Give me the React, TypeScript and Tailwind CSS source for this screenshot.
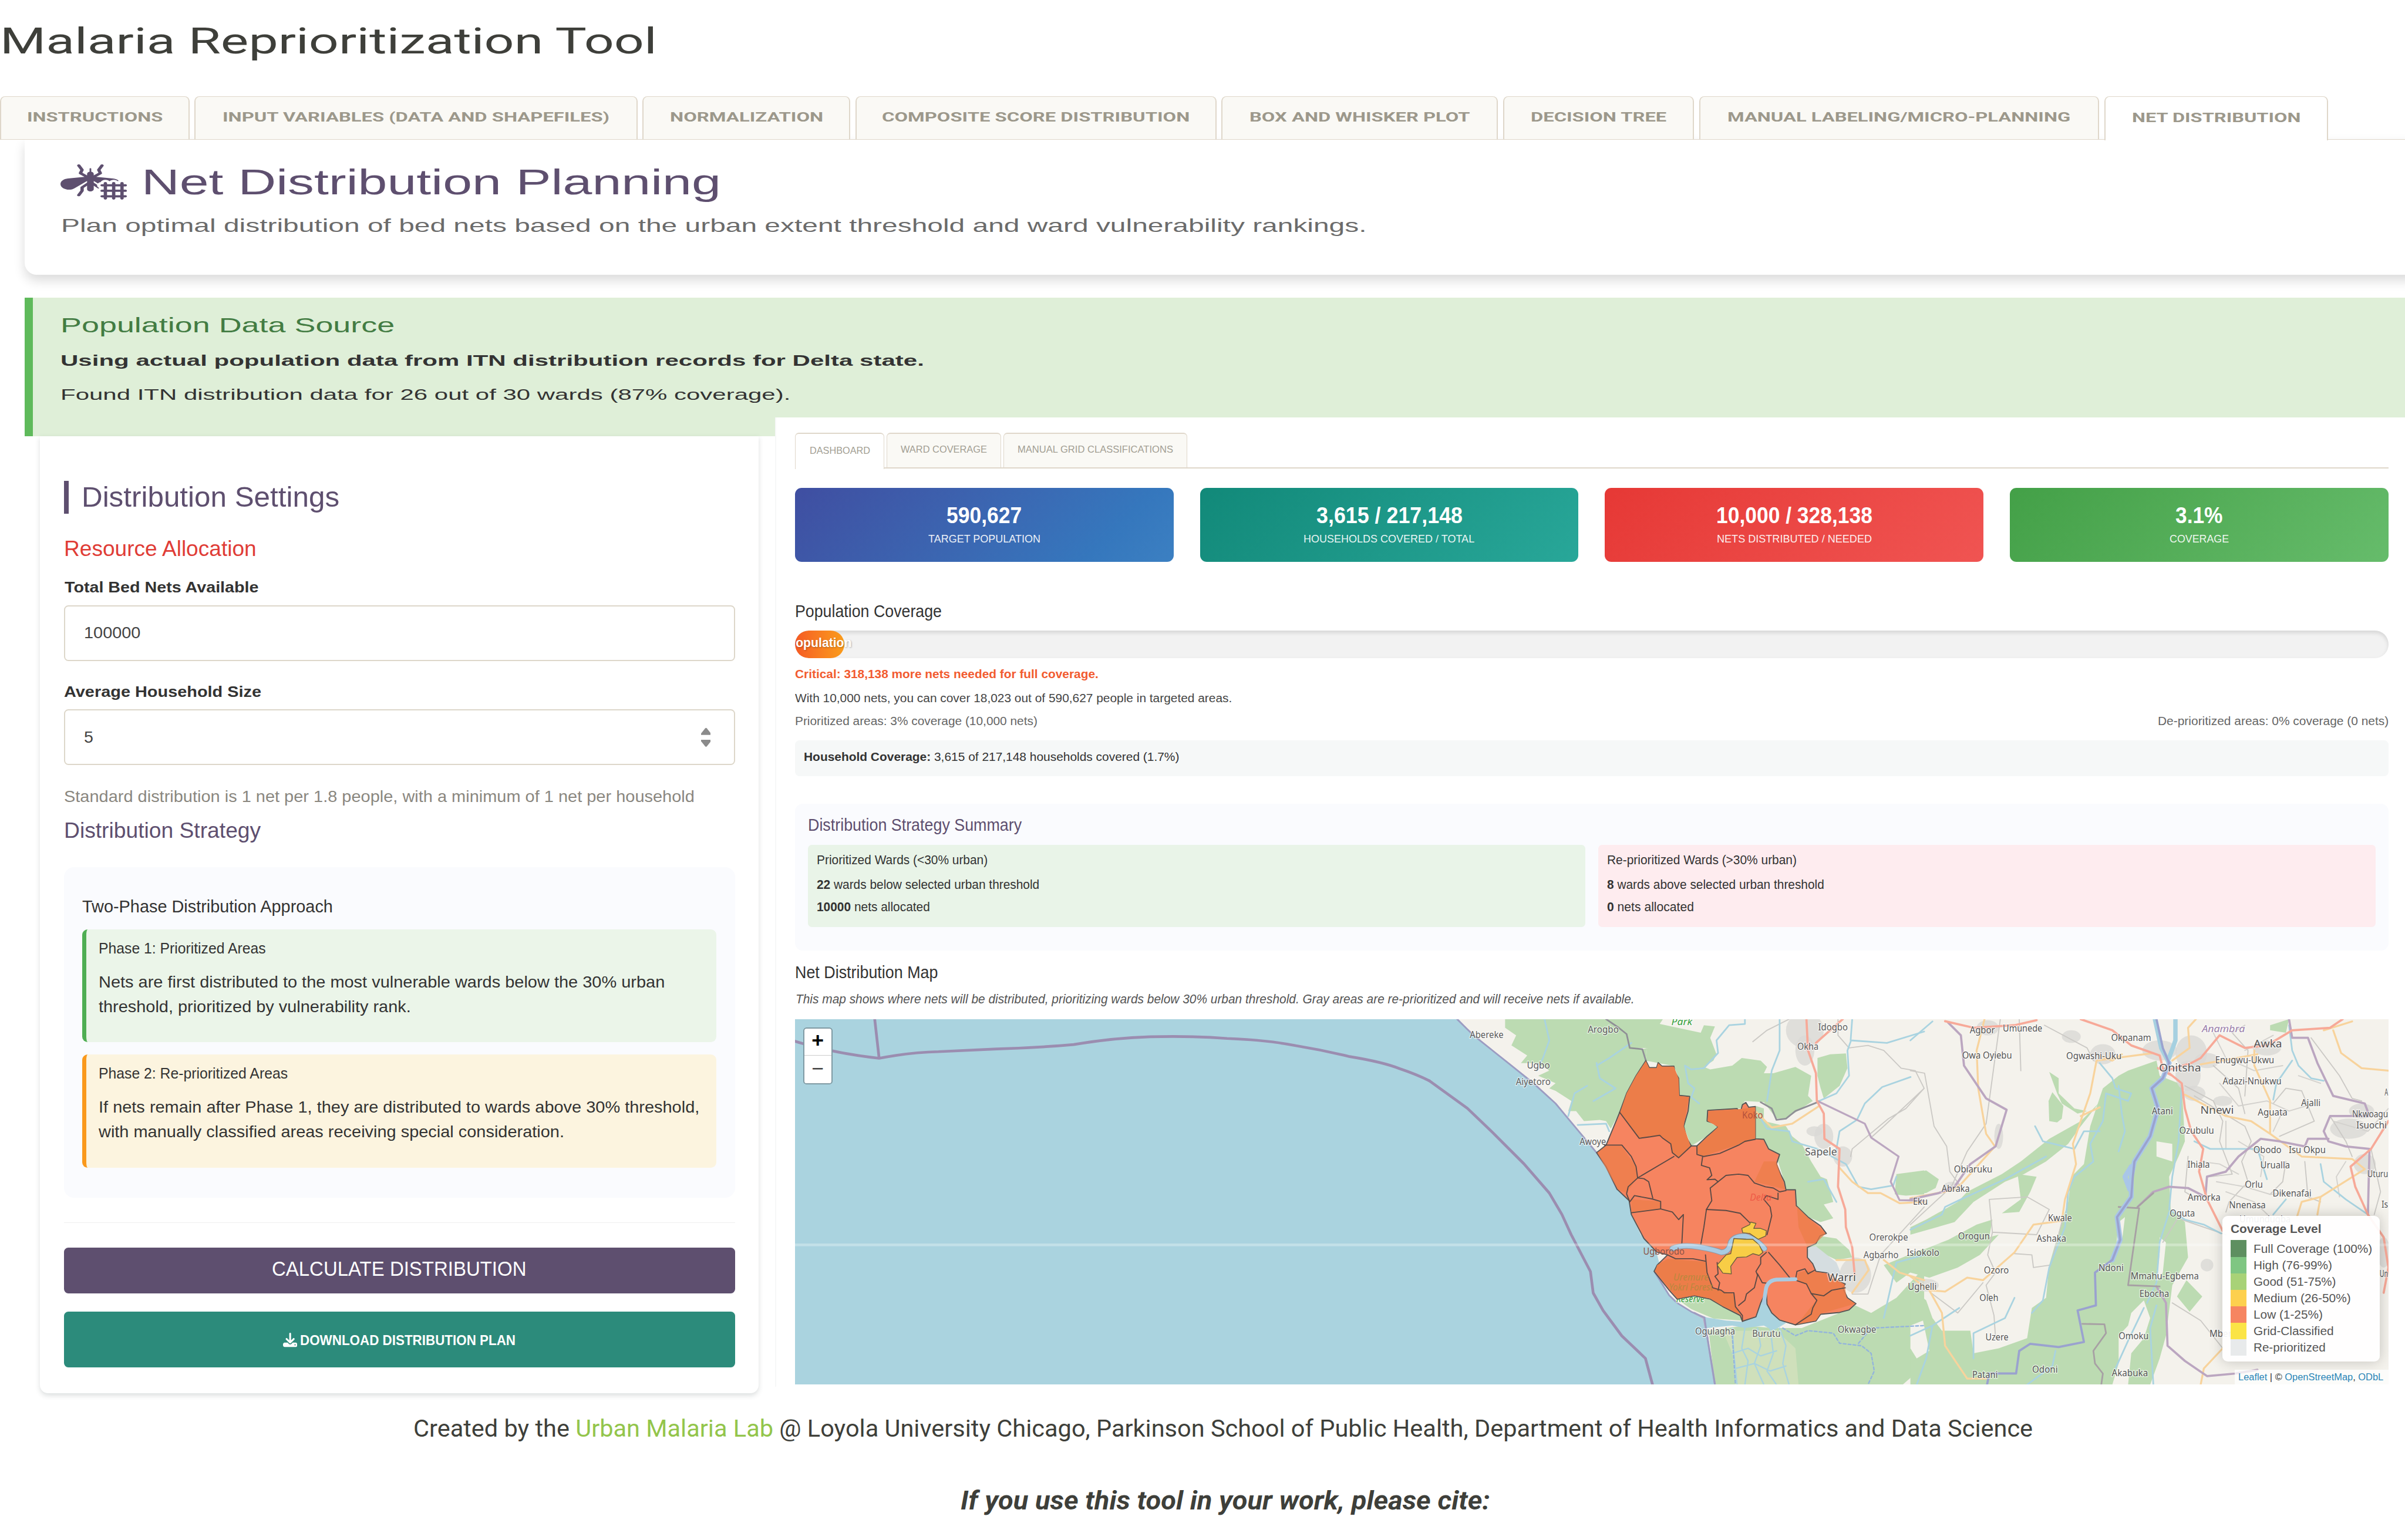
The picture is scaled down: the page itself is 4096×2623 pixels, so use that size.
import { useLayoutEffect, useRef, type ReactNode } from "react";
import { FaDownload, FaMosquitoNet } from "react-icons/fa6";

/** One line of text, stretched horizontally to fill the width of its box. */
function Fit({ className, children }: { className: string; children: ReactNode }) {
  const box = useRef<HTMLDivElement>(null);
  const line = useRef<HTMLSpanElement>(null);
  useLayoutEffect(() => {
    const fit = () => {
      if (!box.current || !line.current) return;
      line.current.style.transform = "none";
      const target = box.current.getBoundingClientRect().width;
      const natural = line.current.getBoundingClientRect().width;
      line.current.style.transform = `scaleX(${target / natural})`;
    };
    fit();
    document.fonts?.ready.then(fit);
  }, []);
  return (
    <div ref={box} className={`flex shrink-0 leading-none whitespace-nowrap ${className}`}>
      <span ref={line} className="block shrink-0 origin-left">
        {children}
      </span>
    </div>
  );
}

const TABS = [
  { label: "INSTRUCTIONS", tab: "w-[345px]", text: "w-[247px]" },
  { label: "INPUT VARIABLES (DATA AND SHAPEFILES)", tab: "w-[806px]", text: "w-[704px]" },
  { label: "NORMALIZATION", tab: "w-[378px]", text: "w-[279px]" },
  { label: "COMPOSITE SCORE DISTRIBUTION", tab: "w-[657px]", text: "w-[560px]" },
  { label: "BOX AND WHISKER PLOT", tab: "w-[503px]", text: "w-[401px]" },
  { label: "DECISION TREE", tab: "w-[348px]", text: "w-[247px]" },
  { label: "MANUAL LABELING/MICRO-PLANNING", tab: "w-[728px]", text: "w-[624px]" },
  { label: "NET DISTRIBUTION", tab: "w-[407px]", text: "w-[307px]", active: true },
];

const SUB_TABS = [
  { label: "DASHBOARD", tab: "w-[163px]", text: "w-[110px]", active: true },
  { label: "WARD COVERAGE", tab: "w-[208px]", text: "w-[157px]" },
  { label: "MANUAL GRID CLASSIFICATIONS", tab: "w-[335px]", text: "w-[283px]" },
];

const STATS = [
  { value: "590,627", label: "TARGET POPULATION", vw: "w-[137px]", lw: "w-[204px]", bg: "from-[#3f4ea1] via-[#3577bd] via-80% to-[#3c80c2]" },
  { value: "3,615 / 217,148", label: "HOUSEHOLDS COVERED / TOTAL", vw: "w-[266px]", lw: "w-[311px]", bg: "from-[#118979] to-[#28a799]" },
  { value: "10,000 / 328,138", label: "NETS DISTRIBUTED / NEEDED", vw: "w-[284px]", lw: "w-[282px]", bg: "from-[#e63835] to-[#f05452]" },
  { value: "3.1%", label: "COVERAGE", vw: "w-[86px]", lw: "w-[108px]", bg: "from-[#43a047] to-[#66bc6b]" },
];

const LEGEND = [
  { label: "Full Coverage (100%)", w: "w-[216px]", bg: "bg-[#5e8f60]" },
  { label: "High (76-99%)", w: "w-[143px]", bg: "bg-[#7fc682]" },
  { label: "Good (51-75%)", w: "w-[150px]", bg: "bg-[#a8d277]" },
  { label: "Medium (26-50%)", w: "w-[177px]", bg: "bg-[#fdd04e]" },
  { label: "Low (1-25%)", w: "w-[126px]", bg: "bg-[#f68561]" },
  { label: "Grid-Classified", w: "w-[146px]", bg: "bg-[#fbe446]" },
  { label: "Re-prioritized", w: "w-[131px]", bg: "bg-[#e8eaeb]" },
];

/* Map geometry: the west sheet and the east sheet have their own grids. */
const WEST = "matrix(0.574 0 0 0.4592 1154 -35)";
const EAST = "matrix(0.574 0 0 0.4592 2029 -35)";

const WEST_GREEN = [
  "240,76 570,76 620,130 640,190 675,195 690,190 686,240 655,300 625,370 603,445 575,510 560,480 540,475 490,480 465,440 440,440 450,400 400,360 380,350 400,330 345,300 380,280 340,250 290,250 310,220 260,180 275,140 240,110",
  "570,76 740,76 730,95 860,130 870,100 905,105 890,150 910,215 900,240 870,265 890,275 960,260 990,230 1050,240 1070,265 1060,290 1090,290 1160,265 1210,300 1200,380 1215,400 1130,470 1100,470 1060,405 1000,400 985,430 882,437 880,480 915,503 880,540 830,578 806,500 825,382 790,378 790,310 775,262 686,240 690,190 640,190",
  "1230,230 1270,215 1320,212 1325,270 1300,340 1250,390 1240,350 1230,300",
  "1035,420 1060,430 1060,480 1130,500 1150,540 1180,570 1210,640 1240,700 1260,710 1280,800 1250,810 1280,865 1240,880 1200,860 1163,815 1160,752 1130,752 1125,720 1105,640 1075,590 1033,550",
  "1480,690 1568,675 1568,770 1510,775 1475,770",
  "1238,935 1290,945 1330,990 1340,1020 1290,1030 1200,975",
  "885,1310 1000,1290 1090,1300 1180,1300 1300,1240 1350,1210 1400,1240 1480,1180 1568,1060 1568,1450 1500,1524 905,1524",
  "785,1185 840,1172 890,1185 930,1215 985,1250 990,1270 900,1262 830,1225",
  "1440,1050 1568,985 1568,1040 1480,1120",
];

const WARDS =
  "686,240 697,268 720,268 725,248 737,262 775,262 778,285 790,310 792,378 825,382 820,440 806,500 815,545 830,578 848,578 880,540 915,503 900,488 880,480 882,437 975,430 985,446 992,415 1003,406 1012,425 1033,422 1033,550 1060,552 1075,590 1110,612 1100,650 1113,690 1125,720 1130,752 1160,752 1163,815 1200,860 1240,895 1258,925 1238,935 1225,965 1198,980 1198,1020 1215,1045 1225,1075 1265,1082 1275,1105 1318,1125 1310,1140 1325,1180 1352,1203 1330,1228 1300,1238 1240,1245 1225,1272 1160,1287 1110,1268 1085,1240 1070,1205 1068,1150 1050,1200 1035,1255 992,1273 985,1250 930,1215 890,1185 840,1172 785,1185 760,1150 712,1075 722,1050 755,1010 720,998 680,945 640,850 633,795 595,750 560,660 530,605 560,575 603,445 625,370 655,300";

const WARD_LINES = [
  "603,445 665,548 700,542 730,536 740,548 765,570 770,605 790,625 830,578",
  "555,575 610,575 640,620 655,660 660,705 775,620",
  "660,705 630,740 625,768 635,800 650,775 705,788 733,798 733,828 640,843",
  "660,705 680,708 695,720 708,785",
  "733,828 770,840 790,870 805,850 800,968",
  "848,578 848,612 870,620 920,608 980,575 1000,560 1033,552",
  "866,620 862,655 888,665 895,695 880,712 905,710 915,720 940,695 980,690 1010,695 1030,725 1065,740 1090,745 1110,760 1130,755",
  "915,720 890,745 895,795 878,830 870,900 860,970",
  "878,830 940,834 985,845 1015,882",
  "1070,930 1085,855 1080,820 1060,790 1068,775 1105,790 1105,765",
  "755,1010 780,1025 835,1025 875,1035",
  "875,1010 880,1080 898,1140 925,1150 935,1160 965,1160 970,1215 992,1250 992,1273",
  "912,1040 915,1085 905,1095 920,1120 915,1150",
  "1068,1000 1050,1020 1050,1045 1035,1075 1040,1090 1030,1140 1005,1165 1000,1190 980,1210",
  "1075,1000 1110,1050 1145,1105",
  "1040,1085 1055,1120 1070,1122",
  "1160,1110 1165,1075 1190,1065 1200,1085 1222,1070",
  "1160,1110 1195,1125 1205,1150 1210,1163 1250,1172 1275,1150 1318,1140",
  "1210,1163 1228,1190 1215,1220 1210,1245 1160,1287",
];

const EAST_GREEN = [
  "690,280 780,240 790,300 810,310 860,335 870,560 850,620 820,700 825,830 870,880 880,1020 830,1130 810,1330 790,1420 760,1524 0,1524 0,1140 50,1190 70,1260 100,1310 190,1310 200,1400 280,1380 370,1340 385,1220 430,1180 440,1050 470,920 500,800 510,700 550,650 570,500 610,350 660,300",
  "600,405 540,480 440,550 350,640 290,690 180,760 150,800 50,870 0,900 0,930 140,880 200,800 300,720 360,690 430,640 500,570 540,500",
  "450,365 485,420 480,470 465,485 440,480 438,400",
  "0,690 50,675 90,710 80,745 50,765 0,770",
  "0,1010 120,950 210,890 260,870 250,940 280,930 220,1010 150,1060 60,1100 0,1080",
  "340,690 400,700 380,760 345,840 290,845 350,790",
  "875,1110 925,1175 885,1235 845,1175",
  "1140,100 1200,76 1190,130 1140,120",
  "440,285 470,310 470,370 520,430 560,440 530,450 480,410 465,370",
];
const EAST_CLEAR = [
  "700,1240 740,1190 760,1260 740,1340 700,1400 690,1524 640,1524 660,1440 660,1330 690,1290",
  "780,560 830,570 830,640 780,620",
  "790,940 810,960 800,1080 780,1120 790,1000",
  "660,880 680,860 670,960 650,1000",
  "0,1290 40,1270 60,1390 20,1420 0,1380",
];

const ROADS: { d: string; sheet: string; stroke: string; w: number }[] = [
  // minor roads
  { sheet: WEST, stroke: "#cbc9c5", w: 2, d: "M1295,76L1295,140L1330,190L1390,180L1440,200L1495,270L1540,280L1568,350L1510,430L1455,470L1340,590L1335,620 M1568,820L1430,1010L1390,1165L1340,1165 M1025,165L1070,120L1140,76 M1400,545L1440,500L1568,350" },
  { sheet: EAST, stroke: "#cbc9c5", w: 2, d: "M285,76L240,490L180,600L130,740L0,890 M0,280L45,290L75,500L115,580L125,680L160,740 M425,100L560,190L580,240 M350,280L345,76 M250,790L370,780L440,830L400,930L260,920L250,790 M260,920L245,1010L270,1080L240,1130L265,1250L270,1340 M65,1160L150,1240L230,1120 M330,1005L385,1010L390,1060L445,1050L480,880 M870,340L960,400L990,480L980,560L1020,690L950,700 M900,380L1060,500L1080,560L1050,640L1070,720L1010,800L1000,840 M1060,380L1070,200L1020,130L1060,100 M960,260L1040,350L1060,450 M1150,410L1190,350L1240,360L1280,480L1170,540 M1250,640L1260,780L1300,800 M1330,460L1380,560L1400,620 M860,870L1000,930 M850,860L800,960 M830,1200L920,1270L990,1380 M1270,150L1360,300L1400,390L1430,400 M1140,770L1180,720L1190,640 M880,620L870,760L910,790 M1460,590L1490,760L1470,850" },
  { sheet: EAST, stroke: "#d3d1cd", w: 2, d: "M960,130L1000,230L1090,280L1180,260 M980,330L1040,420L1130,400L1200,440L1280,410 M1000,480L1000,590 M1060,200L1150,140 M1040,560L1120,620L1110,700 M970,720L1060,740L1140,770L1240,760 M1180,440L1150,520 M1230,300L1300,330 M1000,760L1090,800L1140,860 M920,640L980,650L1040,690 M1340,480L1450,520L1515,430 M1380,640L1350,700L1360,780" },
  // streams
  { sheet: WEST, stroke: "#a9d3e0", w: 3, d: "M1000,76L1000,95L950,100L910,160L915,210L870,270L830,275L810,260L820,330L840,350L830,385L855,410 M1110,76L1110,200L1085,280L1070,400 M1340,76L1335,160L1450,170L1568,125 M1335,165L1325,200L1330,300L1290,370L1235,400 M1525,305L1435,345L1380,410L1355,475L1300,520L1290,590 M365,76L380,160L360,230L340,280 M530,250L540,310L590,350L520,400 M640,170L570,230L530,260 M1035,440L1070,510L1140,520L1150,560L1230,590L1320,650L1360,740L1400,750L1470,735L1480,700 M1200,720L1250,710L1290,800 M1568,1010L1480,1040L1460,1150L1440,1260 M470,495L560,490L570,520 M440,460L460,370L500,340" },
  { sheet: EAST, stroke: "#a9d3e0", w: 3, d: "M0,910L100,850L110,820L160,790L300,710L430,620 M395,500L420,560L520,590L550,520L600,520 M600,250L640,310L650,350L700,370L690,400L620,370L610,480L570,570L580,640L520,700L500,760L490,900L440,1060L420,1190L385,1240 M0,160L70,85 M660,340L670,450L680,520L660,600 M860,340L850,560L830,700L820,830L870,870L930,890L985,925 M900,560L950,590L1100,590L1130,710 M1200,100L1210,200L1230,260L1270,310L1310,320 M1210,240L1160,330L1150,395 M1300,650L1310,720L1380,790L1450,850 M820,840L790,960L780,1120L750,1200 M780,1210L760,1300L770,1524 M330,1180L300,1260L200,1320L200,1420 M155,1220L70,1290L50,1420L20,1524 M0,1330L70,1290 M460,1390L450,1450L370,1524 M740,1220L690,1350L650,1460 M1190,790L1150,850" },
  // secondary roads
  { sheet: WEST, stroke: "#f8d39c", w: 3.5, d: "M1033,440L1085,505L1150,490L1235,420 M1300,665L1340,720L1390,765L1430,765L1490,805L1568,800 M1290,1030L1380,1030L1392,1070L1340,1160 M1440,1030L1490,1080L1568,1110" },
  { sheet: EAST, stroke: "#f8d39c", w: 3.5, d: "M235,76L210,200L215,350L240,530L268,580L160,730L130,755L0,785 M590,240L570,370L545,460L515,570L525,650L490,790L480,875L390,890L330,1000L230,1110L180,1100L110,1155L60,1150L0,1095 M60,1150L100,1240L110,1370L180,1500L240,1500 M590,240L770,210 M830,240L885,190L880,110L905,76 M870,375L1000,460L1080,480L1140,530L1240,620L1400,630L1440,670L1300,780L1240,800L1225,860 M1090,200L1090,260L1140,400L1140,530 M1340,120L1365,210L1430,270L1515,280 M990,1380L930,1460L920,1524 M920,255L1100,215 M1310,120L1400,85 M1300,780L1290,850 M600,220L640,240L670,215 M540,460L600,425" },
  // state boundaries
  { sheet: WEST, stroke: "#bba6c0", w: 3.5, d: "M1230,400L1380,490L1400,545L1487,620L1462,720L1490,793L1568,795 M840,1240L870,1260L880,1330L905,1524" },
  { sheet: WEST, stroke: "#8f8f96", w: 3, d: "M560,76L600,110L625,135L635,190L675,195L686,240 M1050,405L1085,430L1100,475L1130,470L1160,440L1230,405" },
  { sheet: EAST, stroke: "#bba6c0", w: 4, d: "M120,90L160,140L170,260L240,390L305,435L270,580L190,650L140,740L90,765L0,790 M1200,76L1210,150L1260,150L1290,250L1340,380L1440,410L1455,460L1330,460L1310,520L1325,560L1380,580L1455,590L1450,850 M1325,550L1260,550L1250,580L1170,560L1110,550L1040,620L1000,680L940,700L935,780L880,745L820,740L770,760L720,820 M780,1135L810,1200L815,1370L870,1430L940,1490L1030,1480L1100,1465" },
  { sheet: EAST, stroke: "#a7a0a4", w: 3, d: "M660,820L725,825L690,1130L790,1135 M545,1283L615,1285L620,1320L580,1390L585,1440L610,1480L605,1524 M720,820L770,765" },
  // primary roads
  { sheet: WEST, stroke: "#f7a998", w: 4, d: "M1195,76L1200,200L1225,290L1228,400L1250,450L1252,550L1300,590L1295,740L1318,830L1320,900L1340,980L1348,1090 M1310,76L1225,170" },
  { sheet: EAST, stroke: "#f7a998", w: 4, d: "M110,84L200,110L330,100L400,80 M540,76L640,120L700,180L790,220L800,270L860,330L870,430L890,520L928,590L915,680L940,790L990,915 M810,280L890,250L920,230L980,140L1060,190L1130,180L1210,120L1330,110L1370,76 M1515,480L1460,590L1395,660L1410,740L1450,850L1500,940L1515,1060L1500,1160 M830,300L785,270" },
  // the Niger
  { sheet: EAST, stroke: "#a6d0e0", w: 8, d: "M775,76L795,190L820,250 M840,76L840,160L820,230" },
  { sheet: EAST, stroke: "#a9c6e8", w: 9, d: "M820,250L800,310L765,350L785,430L760,540L710,640L700,700L700,780L655,860L665,950L640,1030 M700,660L680,700L695,750" },
  { sheet: EAST, stroke: "#9aa2cf", w: 4, d: "M780,76L800,190L820,250L800,310L765,350L785,430L760,540L710,640L705,700L700,780L655,860L665,950L640,1030L585,1080L588,1210L530,1230L550,1355L470,1375L380,1362L345,1390L335,1480L250,1480L243,1524" },
];

const URBAN: [number, number, number, number, 0 | 1][] = [
  [1190, 120, 60, 70, 0], [1190, 200, 30, 60, 0], [1250, 540, 30, 50, 0], [1310, 620, 30, 40, 0], [1350, 1090, 50, 70, 0], [1220, 520, 25, 20, 0],
  [890, 210, 50, 70, 1], [880, 300, 40, 60, 1], [790, 200, 55, 40, 1], [940, 240, 40, 30, 1], [510, 145, 30, 25, 1], [610, 215, 40, 40, 1], [245, 110, 35, 30, 1], [900, 370, 35, 30, 1], [1130, 190, 45, 30, 1], [990, 400, 30, 20, 1], [1430, 440, 40, 30, 1], [1390, 510, 60, 40, 1], [50, 1130, 40, 25, 1], [130, 740, 25, 20, 1], [1440, 650, 35, 40, 1], [280, 540, 14, 50, 1], [940, 1050, 20, 25, 1], [1500, 1000, 20, 60, 1],
];

type Label = [string, number, number, number, number?];
const WEST_LABELS: Label[] = [
  ["Abereke", 128, 235, 137], ["Arogbo", 502, 600, 118], ["Ugbo", 309, 382, 260], ["Aiyetoro", 274, 384, 324], ["Awoye", 476, 560, 562],
  ["Idogbo", 1232, 1326, 108], ["Okha", 1166, 1233, 185], ["Sapele", 1190, 1292, 602, 20], ["Orerokpe", 1394, 1517, 940], ["Agbarho", 1376, 1487, 1010],
  ["Ogulagha", 842, 969, 1313], ["Burutu", 1023, 1113, 1322], ["Okwagbe", 1294, 1416, 1306],
];
const EAST_LABELS: Label[] = [
  ["Agbor", 188, 268, 120], ["Umunede", 293, 418, 112], ["Okpanam", 636, 763, 150], ["Awka", 1088, 1178, 172, 20], ["Owa Oyiebu", 164, 322, 220],
  ["Ogwashi-Uku", 494, 669, 222], ["Enugwu-Ukwu", 966, 1153, 237], ["Onitsha", 788, 921, 268, 20], ["Adazi-Nnukwu", 990, 1176, 322], ["Ajalli", 1238, 1300, 408],
  ["Nnewi", 919, 1025, 435, 20], ["Aguata", 1101, 1195, 444], ["Atani", 765, 832, 441], ["Nkwoagu", 1400, 1514, 452], ["Isuochi", 1413, 1510, 497],
  ["Ozubulu", 852, 962, 518], ["Obodo", 1087, 1176, 594], ["Isu Okpu", 1199, 1316, 595], ["Ihiala", 878, 949, 652], ["Urualla", 1109, 1203, 655],
  ["Uturu", 1448, 1514, 690], ["Obiaruku", 138, 260, 670], ["Abraka", 99, 188, 748], ["Orlu", 1060, 1117, 732], ["Dikenafai", 1148, 1271, 766],
  ["Amorka", 879, 983, 783], ["Eku", 8, 55, 799], ["Nnenasa", 1010, 1126, 812], ["Oguta", 822, 902, 845], ["Kwale", 436, 512, 863],
  ["Orogun", 151, 252, 937], ["Ashaka", 400, 494, 945], ["Isiokolo", -12, 92, 1000], ["Ozoro", 233, 312, 1071], ["Ndoni", 596, 676, 1062],
  ["Mmahu-Egbema", 698, 914, 1094], ["Ebocha", 726, 820, 1163], ["Ughelli", -8, 83, 1135], ["Oleh", 219, 279, 1180], ["Uzere", 238, 311, 1335],
  ["Omoku", 660, 755, 1332], ["Odoni", 386, 467, 1465], ["Patani", 196, 277, 1485], ["Akabuka", 638, 753, 1477], ["Mberichi", 948, 1064, 1323],
  ["Umundugba", 1043, 1205, 868], ["Is", 1493, 1514, 810], ["Un", 1487, 1514, 1085], ["A", 1503, 1514, 365],
];

function Labels({ items, x0, fill, italic }: { items: Label[]; x0: number; fill: string; italic?: boolean }) {
  return (
    <g fill={fill} stroke="#ffffff" strokeOpacity="0.6" strokeWidth="3" paintOrder="stroke" fontFamily='"Noto Sans", sans-serif' fontStyle={italic ? "italic" : "normal"}>
      {items.map(([name, a, b, y, size = 17]) => (
        <text key={name + a} x={x0 + a * 0.574} y={-35 + y * 0.4592 + size * 0.34} fontSize={size} textLength={(b - a) * 0.574} lengthAdjust="spacingAndGlyphs">
          {name}
        </text>
      ))}
    </g>
  );
}

function MapTiles() {
  return (
    <svg viewBox="0 0 2899 665" preserveAspectRatio="none" className="block h-full w-full" fill="none" strokeLinejoin="round" strokeLinecap="round">
      <rect width="2899" height="665" fill="#f4f2ec" />
      <g transform={WEST}>
        {WEST_GREEN.map((p) => <polygon key={p} points={p} fill="#bcdbb2" />)}
        <polygon points="930,1310 1100,1310 1160,1380 1170,1524 970,1524 960,1400" fill="#cfe0bb" />
        <polygon points="-2012,70 88,70 140,140 250,250 330,330 400,410 440,470 480,530 530,605 560,660 595,750 635,800 640,850 670,930 720,1000 730,1050 715,1080 760,1170 785,1200 830,1235 880,1258 940,1270 990,1275 1040,1240 1055,1180 1070,1180 1090,1240 1130,1280 1090,1310 1060,1290 1000,1300 960,1290 880,1300 890,1400 905,1530 -2012,1530" fill="#aad3df" />
        <polygon points="1198,980 1225,975 1290,1040 1310,1100 1265,1082 1225,1075 1215,1045 1198,1020" fill="#d5dde0" />
      </g>
      <g transform={EAST}>
        {EAST_GREEN.map((p) => <polygon key={p} points={p} fill="#bcdbb2" />)}
        {EAST_CLEAR.map((p) => <polygon key={p} points={p} fill="#f4f2ec" />)}
      </g>
      {URBAN.map(([x, y, rx, ry, east]) => (
        <ellipse key={`${x}-${y}`} cx={(east ? 2029 : 1154) + x * 0.574} cy={-35 + y * 0.4592} rx={rx * 0.574} ry={ry * 0.4592} fill="#d9d8d6" opacity="0.8" />
      ))}
      {/* delta creeks */}
      <g transform={WEST} stroke="#a9d3e0" strokeWidth="2.5">
        <path vectorEffect="non-scaling-stroke" d="M960,1300L965,1400L975,1524 M1000,1300L990,1380L1010,1430L1000,1524 M1040,1300L1050,1370L1030,1440L1060,1524 M1080,1300L1090,1400L1070,1470L1100,1524 M960,1400L1010,1380L1050,1410L1100,1390 M970,1460L1030,1440L1080,1470L1130,1450 M1110,1300L1130,1370L1120,1440L1140,1524" />
      </g>
      <g transform={WEST} stroke="#93b4dc" strokeWidth="2.5" strokeDasharray="5 4">
        <path vectorEffect="non-scaling-stroke" d="M1120,1300L1160,1330L1200,1310L1280,1320L1300,1360L1370,1370L1400,1400L1410,1470L1390,1524 M960,1330L970,1524 M1360,1360L1400,1300L1568,1290" />
      </g>
      {ROADS.map((r) => (
        <g key={r.d} transform={r.sheet} stroke={r.stroke} strokeWidth={r.w}>
          <path vectorEffect="non-scaling-stroke" d={r.d} />
        </g>
      ))}
      {/* coastline and territorial limit */}
      <g transform={WEST} stroke="#9c9cc2" strokeWidth="3">
        <path vectorEffect="non-scaling-stroke" d="M88,76L140,140L250,250L330,330L400,410L440,470L480,530L530,605L560,660L595,750 M715,1080L760,1170L785,1200L830,1235L872,1258L880,1330L905,1524" />
      </g>
      <g stroke="#9b8db0" strokeWidth="5">
        <path d="M145,0L153,71 M0,40Q70,62 153,71Q210,60 261,59L367,54Q440,52 507,46Q580,34 646,32Q720,30 786,35Q860,38 911,48Q960,56 1009,68Q1070,78 1100,90Q1130,100 1154,112" />
        <path d="M1154,112L1223,162L1269,206L1326,263L1372,316L1395,355L1412,392L1447,459L1452,498L1470,530L1504,576L1547,617L1560,665" />
      </g>
      <Labels x0={1154} fill="#5b5b5b" items={WEST_LABELS} />
      <Labels x0={1154} fill="#35a03c" italic items={[["Park", 767, 833, 88], ["Reserve", 782, 872, 1184]]} />
      <Labels x0={2029} fill="#555555" items={EAST_LABELS} />
      <Labels x0={2029} fill="#9a7fab" italic items={[["Anambra", 924, 1060, 116]]} />
      <g transform={WEST}>
        <polygon points={WARDS} fill="#f68460" stroke="#555" strokeWidth="2" vectorEffect="non-scaling-stroke" />
        <g fill="#ec7d49">
          <polygon points="686,242 697,270 720,270 725,250 737,264 775,264 790,312 792,380 823,384 806,500 828,578 790,622 770,605 765,570 735,540 665,546 604,447 625,370 655,300" />
          <polygon points="885,440 975,433 1033,425 1033,550 980,573 870,618 850,610 850,580 915,503 882,480" />
          <polygon points="722,1050 755,1025 875,1037 882,1085 898,1140 965,1165 970,1215 985,1245 930,1213 890,1183 840,1170 787,1183 715,1075" />
          <polygon points="1170,1080 1195,1072 1225,1078 1265,1084 1316,1127 1322,1180 1350,1203 1240,1243 1225,1270 1165,1285 1226,1190 1208,1160 1200,1130 1163,1110" opacity="0.8" />
          <polygon points="560,578 608,577 655,660 658,703 625,766 597,750 532,605" opacity="0.7" />
          <polygon points="1165,818 1200,862 1256,925 1225,963 1198,978 1170,900" opacity="0.7" />
          <polygon points="1060,640 1100,640 1128,750 1030,720" opacity="0.7" />
          <polygon points="640,790 733,798 733,828 640,843" opacity="0.7" />
        </g>
        <g stroke="#5b4a45" strokeWidth="2">
          {WARD_LINES.map((p) => <polyline key={p} points={p} vectorEffect="non-scaling-stroke" />)}
        </g>
        <g stroke="#8d9aa8" strokeWidth="10.5">
          <path vectorEffect="non-scaling-stroke" d="M770,985Q800,968 850,978T925,1000Q950,1000 955,960Q965,935 1000,935Q1035,945 1062,985" />
        </g>
        <g stroke="#a9cbe2" strokeWidth="8">
          <path vectorEffect="non-scaling-stroke" d="M770,985Q800,968 850,978T925,1000Q950,1000 955,960Q965,935 1000,935Q1035,945 1062,985" />
          <path vectorEffect="non-scaling-stroke" d="M1160,1106L1100,1108Q1070,1112 1066,1150L1060,1200" strokeWidth="7" />
        </g>
        <g fill="#f8cd46" stroke="#6b6040" strokeWidth="1.5">
          <polygon vectorEffect="non-scaling-stroke" points="990,905 1015,890 1018,880 1035,885 1028,905 1050,905 1068,914 1066,935 1042,948 1015,925 993,922" />
          <polygon vectorEffect="non-scaling-stroke" points="965,945 1000,948 1025,948 1045,970 1057,1000 1045,1012 1025,1005 1005,1018 975,1020 955,1055 957,1085 930,1082 912,1050 940,1010 955,1005" />
        </g>
      </g>
      <Labels x0={1154} fill="#4c4c4c" items={[["Warri", 1262, 1352, 1100, 20]]} />
      {/* labels seen through the ward overlay */}
      <g fontFamily='"Noto Sans", sans-serif' fontSize="17">
        <text x="1723" y="180" fill="#b3503c" textLength="38" lengthAdjust="spacingAndGlyphs">Koko</text>
        <text x="1543" y="428" fill="#8a5348" textLength="75" lengthAdjust="spacingAndGlyphs">Ugborodo</text>
        <text x="1737" y="330" fill="#ec4a3d" opacity="0.7" fontStyle="italic">Delta</text>
        <g fill="#a98c3a" opacity="0.75" fontStyle="italic">
          <text x="1598" y="475" textLength="64" lengthAdjust="spacingAndGlyphs">Uremure</text>
          <text x="1590" y="494" textLength="80" lengthAdjust="spacingAndGlyphs">Yokri Forest</text>
        </g>
      </g>
      <rect y="408" width="2899" height="5" fill="#ffffff" opacity="0.3" />
    </svg>
  );
}

function NetMap() {
  return (
    <div className="relative mt-[24px] h-[665px] w-[2899px] overflow-hidden">
      <MapTiles />
      <div className="absolute top-[15px] left-[15px] flex w-[53px] flex-col rounded-[6px] border-3 border-[#7f9aa3] bg-white text-[38px] leading-none font-bold text-black">
        <button className="flex h-[50px] items-center justify-center border-b-2 border-[#ccc] pb-[3px]">+</button>
        <button className="flex h-[50px] items-center justify-center pb-[3px] font-normal text-[#444]">−</button>
      </div>
      <div className="absolute right-[16px] bottom-[42px] h-[265px] w-[286px] rounded-[10px] bg-white/93 pt-[12px] pl-[15px] text-[22.5px] text-[#555] shadow-[0_0_24px_rgba(0,0,0,0.2)]">
        <Fit className="w-[165px] font-bold">Coverage Level</Fit>
        <div className="mt-[10px] flex flex-col">
          {LEGEND.map((l) => (
            <div key={l.label} className="flex h-[30px] items-center gap-[12px]">
              <span className={`h-full w-[29px] ${l.bg}`} />
              <Fit className={l.w}>{l.label}</Fit>
            </div>
          ))}
        </div>
      </div>
      <div className="absolute right-0 bottom-0 flex h-[27px] w-[280px] items-center bg-white/75 pl-[7px] text-[17.5px] text-[#333]">
        <Fit className="w-[264px]">
          <span className="text-[#2a86b8]">Leaflet</span> | © <span className="text-[#2a86b8]">OpenStreetMap</span>, <span className="text-[#2a86b8]">ODbL</span>
        </Fit>
      </div>
    </div>
  );
}

function Settings() {
  return (
    <section className="ml-[72.5px] flex h-[1741px] w-[1308px] flex-col rounded-b-[15px] bg-white px-[43.5px] pt-[81px] text-[#333] shadow-[0_4px_9px_rgba(60,80,80,0.18)]">
      <div className="flex h-[60px] shrink-0 items-center border-l-9 border-[#5e4f6f] pl-[24px]">
        <Fit className="w-[469px] text-[51px] text-[#5e4f6f]">Distribution Settings</Fit>
      </div>
      <Fit className="mt-[44px] w-[350px] text-[40px] text-[#e03c36]">Resource Allocation</Fit>
      <Fit className="mt-[36px] ml-[2px] w-[353px] text-[28px] font-bold">Total Bed Nets Available</Fit>
      <div className="mt-[18.5px] flex h-[101.5px] shrink-0 items-center rounded-[8px] border-3 border-[#ddd7ca] bg-white pl-[35px] text-[30px] text-[#444]">
        <Fit className="w-[103px]">100000</Fit>
      </div>
      <Fit className="mt-[42px] w-[359px] text-[28px] font-bold">Average Household Size</Fit>
      <div className="mt-[18px] flex h-[101.5px] shrink-0 items-center justify-between rounded-[8px] border-3 border-[#ddd7ca] bg-white pr-[42px] pl-[35px] text-[30px] text-[#444]">
        <Fit className="w-[17px]">5</Fit>
        <svg viewBox="0 0 18 36" className="h-[36px] w-[18px]" fill="#8b8b8b">
          <path d="M7.5 1.5Q9 0 10.5 1.5L18 11V13.5H0V11Z" />
          <path d="M0 22.500H18V25L10.500 34.500Q9 36 7.500 34.500L0 25Z" />
        </svg>
      </div>
      <Fit className="mt-[43px] w-[1147px] text-[30px] text-[#8a877f]">
        Standard distribution is 1 net per 1.8 people, with a minimum of 1 net per household
      </Fit>
      <Fit className="mt-[26.5px] w-[358px] text-[40px] text-[#5e4f6f]">Distribution Strategy</Fit>
      <div className="mt-[46px] h-[602px] shrink-0 rounded-[18px] bg-[#fafbfe] pt-[57px] pr-[34px] pl-[34px]">
        <Fit className="w-[456px] text-[31px]">Two-Phase Distribution Approach</Fit>
        <div className="mt-[25.5px] h-[205.500px] rounded-[10px] border-l-8 border-[#4fae53] bg-[#ebf5e9] pt-[21px] pl-[22px]">
          <Fit className="w-[304px] text-[27px]">Phase 1: Prioritized Areas</Fit>
          <Fit className="mt-[32px] w-[1030px] text-[30.5px]">Nets are first distributed to the most vulnerable wards below the 30% urban</Fit>
          <Fit className="mt-[14px] w-[568px] text-[30.5px]">threshold, prioritized by vulnerability rank.</Fit>
        </div>
        <div className="mt-[22.5px] h-[205.500px] rounded-[10px] border-l-8 border-[#fa991c] bg-[#fcf4df] pt-[21px] pl-[22px]">
          <Fit className="w-[344px] text-[27px]">Phase 2: Re-prioritized Areas</Fit>
          <Fit className="mt-[32px] w-[1093px] text-[30.5px]">If nets remain after Phase 1, they are distributed to wards above 30% threshold,</Fit>
          <Fit className="mt-[14px] w-[847px] text-[30.5px]">with manually classified areas receiving special consideration.</Fit>
        </div>
      </div>
      <hr className="mt-[44px] border-t-2 border-[#eeeeee]" />
      <button className="mt-[45px] flex h-[84px] shrink-0 items-center justify-center rounded-[8px] bg-[#5e4f6f] pb-[6px] text-[37px] text-white">
        <Fit className="w-[463px]">CALCULATE DISTRIBUTION</Fit>
      </button>
      <button className="mt-[33px] flex h-[101px] shrink-0 items-center justify-center gap-[5px] rounded-[8px] bg-[#2c8b7b] pt-[2px] text-[25.5px] font-bold text-white">
        <FaDownload className="h-[26px] w-[26px]" preserveAspectRatio="none" />
        <Fit className="w-[392px]">DOWNLOAD DISTRIBUTION PLAN</Fit>
      </button>
    </section>
  );
}

function Dashboard() {
  return (
    <section className="-mt-[34.5px] ml-[29.5px] h-[1764px] w-[2965px] border-l-3 border-[#f7f8f8] bg-white pt-[28.5px] pl-[34px] text-[#333]">
      <nav className="flex h-[65px] w-[2899px] gap-[4px] border-b-3 border-[#dfd7ca] text-[17px] text-[#a29e93]">
        {SUB_TABS.map((t) => (
          <div
            key={t.label}
            className={`flex items-center justify-center rounded-t-[7px] border-x-2 border-t-3 border-[#dfd7ca] pb-[3px] ${t.tab} ${t.active ? "-mb-[3px] bg-white" : "bg-[#faf9f5]"}`}
          >
            <Fit className={t.text}>{t.label}</Fit>
          </div>
        ))}
      </nav>
      <div className="mt-[35px] grid h-[134.500px] w-[2899px] grid-cols-4 gap-[48px] text-white">
        {STATS.map((s) => (
          <div key={s.label} className={`flex flex-col items-center rounded-[12px] bg-linear-135 pt-[30px] ${s.bg}`}>
            <Fit className={`text-[41px] font-bold ${s.vw}`}>{s.value}</Fit>
            <Fit className={`mt-[12px] text-[19.5px] opacity-90 ${s.lw}`}>{s.label}</Fit>
          </div>
        ))}
      </div>
      <Fit className="mt-[73.500px] w-[267px] text-[31.5px]">Population Coverage</Fit>
      <div className="mt-[20.500px] h-[50px] w-[2899px] overflow-hidden rounded-[25px] bg-[#f2f2f2] shadow-[inset_0_4px_8px_rgba(0,0,0,0.12)]">
        <div className="flex h-full w-[90px] justify-center rounded-[25px] bg-linear-to-r from-[#f55a24] to-[#fa9c1b] pt-[9px] text-[24.5px] font-bold text-white [text-shadow:1px_1px_3px_rgba(0,0,0,0.3)]">
          <Fit className="w-[117px]">Population</Fit>
        </div>
      </div>
      <Fit className="mt-[18px] w-[552px] text-[22px] font-bold text-[#f25b30]">Critical: 318,138 more nets needed for full coverage.</Fit>
      <Fit className="mt-[21px] w-[795px] text-[22.5px] text-[#444]">With 10,000 nets, you can cover 18,023 out of 590,627 people in targeted areas.</Fit>
      <div className="mt-[19.500px] flex w-[2899px] justify-between text-[22.5px] text-[#666]">
        <Fit className="w-[441px]">Prioritized areas: 3% coverage (10,000 nets)</Fit>
        <Fit className="w-[420px]">De-prioritized areas: 0% coverage (0 nets)</Fit>
      </div>
      <div className="mt-[24.500px] flex h-[64.500px] w-[2899px] items-center rounded-[8px] bg-[#f6f8f8] pb-[6px] pl-[16px] text-[22.5px]">
        <Fit className="w-[683px]">
          <b>Household Coverage:</b> 3,615 of 217,148 households covered (1.7%)
        </Fit>
      </div>
      <div className="mt-[50px] h-[267px] w-[2899px] rounded-[14px] bg-[#fafbfe] px-[24px] pt-[23.500px]">
        <Fit className="w-[389px] text-[31px] text-[#5e4f6f]">Distribution Strategy Summary</Fit>
        <div className="mt-[21px] grid h-[149.500px] grid-cols-2 gap-[23px] text-[23px]">
          <div className="rounded-[7px] bg-[#e9f4e8] pt-[17px] pl-[16px]">
            <Fit className="w-[311px]">Prioritized Wards (&lt;30% urban)</Fit>
            <Fit className="mt-[22px] w-[405px]"><b>22</b> wards below selected urban threshold</Fit>
            <Fit className="mt-[17px] w-[206px]"><b>10000</b> nets allocated</Fit>
          </div>
          <div className="rounded-[7px] bg-[#feecef] pt-[17px] pl-[16px]">
            <Fit className="w-[345px]">Re-prioritized Wards (&gt;30% urban)</Fit>
            <Fit className="mt-[22px] w-[395px]"><b>8</b> wards above selected urban threshold</Fit>
            <Fit className="mt-[17px] w-[158px]"><b>0</b> nets allocated</Fit>
          </div>
        </div>
      </div>
      <Fit className="mt-[23.500px] w-[260px] text-[31.5px]">Net Distribution Map</Fit>
      <Fit className="mt-[22.500px] ml-px w-[1526px] text-[23.5px] text-[#555] italic">
        This map shows where nets will be distributed, prioritizing wards below 30% urban threshold. Gray areas are re-prioritized and will receive nets if available.
      </Fit>
      <NetMap />
    </section>
  );
}

export default function App() {
  return (
    <div className="h-[2623px] w-[4096px] overflow-hidden bg-white">
      <div className="flex w-[4375px] flex-col bg-white font-['Liberation_Sans',Arial,sans-serif] [zoom:0.93623]">
        <h1 className="pt-[44px] font-['Roboto',sans-serif]">
          <Fit className="w-[1195px] text-[65px] text-[#3e3f3a]">Malaria Reprioritization Tool</Fit>
        </h1>
        <nav className="relative z-10 mt-[66px] flex h-[79px] shrink-0 gap-[9px] border-b-2 border-[#dfd7ca] font-['Roboto',sans-serif] text-[23px] font-bold text-[#9c988b]">
          {TABS.map((t) => (
            <div
              key={t.label}
              className={`flex items-center justify-center rounded-t-[9px] border-x-3 border-t-2 border-[#dfd7ca] pb-[2px] ${t.tab} ${t.active ? "-mb-[2px] bg-white" : "bg-[#faf9f5]"}`}
            >
              <Fit className={t.text}>{t.label}</Fit>
            </div>
          ))}
        </nav>
        <header className="ml-[45px] h-[246px] w-[4360px] shrink-0 rounded-b-[22px] bg-white pt-[45px] pl-[65px] shadow-[0_10px_20px_rgba(0,0,0,0.14)]">
          <div className="flex items-center text-[#5e4f6f]">
            <FaMosquitoNet className="h-[64px] w-[121px]" preserveAspectRatio="none" />
            <Fit className="ml-[26px] w-[1054px] text-[65px]">Net Distribution Planning</Fit>
          </div>
          <Fit className="mt-[30px] ml-px w-[2375px] text-[34px] text-[#6b6b6b]">
            Plan optimal distribution of bed nets based on the urban extent threshold and ward vulnerability rankings.
          </Fit>
        </header>
        <div className="mt-[42px] ml-[45px] h-[251.500px] shrink-0 border-l-15 border-[#5fba5b] bg-[#dfefd8] pt-[32px] pl-[50px] text-[27px] text-[#333]">
          <Fit className="w-[608px] text-[37px] text-[#437c43]">Population Data Source</Fit>
          <Fit className="mt-[32px] w-[1571px] font-bold">Using actual population data from ITN distribution records for Delta state.</Fit>
          <Fit className="mt-[35.5px] w-[1328px]">Found ITN distribution data for 26 out of 30 wards (87% coverage).</Fit>
        </div>
        <main className="flex shrink-0 items-start">
          <Settings />
          <Dashboard />
        </main>
        <footer className="font-['Roboto',sans-serif] text-[#3e3f3a]">
          <Fit className="mt-[43px] ml-[752px] w-[2946px] text-[43.500px]">
            Created by the <span className="text-[#93c54b]">Urban Malaria Lab</span> @ Loyola University Chicago, Parkinson School of Public Health, Department of Health Informatics and Data Science
          </Fit>
          <Fit className="mt-[86px] ml-[1747px] w-[963px] text-[48px] font-bold italic">If you use this tool in your work, please cite:</Fit>
        </footer>
      </div>
    </div>
  );
}
